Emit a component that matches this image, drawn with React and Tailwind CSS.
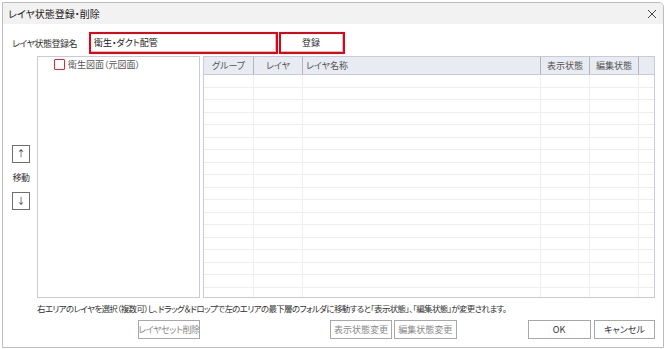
import React from 'react';

const COLS = [
  { key: 'group', label: 'グループ', w: 'w-[50px]', align: 'justify-center' },
  { key: 'layer', label: 'レイヤ', w: 'w-[49px]', align: 'justify-center' },
  { key: 'name', label: 'レイヤ名称', w: 'w-[238px]', align: 'justify-start pl-[3px]' },
  { key: 'disp', label: '表示状態', w: 'w-[49px]', align: 'justify-center' },
  { key: 'edit', label: '編集状態', w: 'w-[49px]', align: 'justify-center' },
];

const ROWS = Array.from({ length: 19 }, (_, i) => i);

function Btn({ children, className = '', disabled }) {
  return (
    <div
      className={`h-[19px] flex items-center justify-center whitespace-nowrap bg-white border border-[#a8a8a8] ${
        disabled ? 'text-[#8a8a8a]' : 'text-[#333]'
      } ${className}`}
    >
      {children}
    </div>
  );
}

export default function App() {
  return (
    <div className="w-[667px] h-[349px] bg-white pt-[2px] pl-[2px] font-['Noto_Sans_CJK_JP',sans-serif] [font-feature-settings:'palt'] text-[9px] leading-none text-[#333]">
      <div className="w-[662px] h-[346px] border border-[#bdbdbd] rounded-tr-[5px] flex flex-col overflow-hidden">
        {/* title bar */}
        <div className="h-[21px] bg-[#f2f2f2] flex items-center justify-between pl-[5px] pr-[5px] shrink-0">
          <span className="text-[#222] text-[10px]">レイヤ状態登録・削除</span>
          <svg width="10" height="10" viewBox="0 0 10 10" className="mr-[1px]">
            <path d="M1 1 L9 9 M9 1 L1 9" stroke="#444" strokeWidth="1" fill="none" />
          </svg>
        </div>

        <div className="flex-1 flex flex-col pl-[9px] pr-[8px] pt-[8px]">
          {/* name row */}
          <div className="flex items-center h-[22px]">
            <span className="w-[77px] tracking-[-0.5px]">レイヤ状態登録名</span>
            <div className="w-[189px] h-[22px] border-2 border-[#e60012] bg-white">
              <div className="h-full border-r border-b border-[#c4c4c4] flex items-center pl-[3px] text-[#222]">
                衛生・ダクト配管
              </div>
            </div>
            <div className="ml-[1px] w-[66px] h-[22px] border-2 border-[#e60012] bg-white">
              <div className="h-full border-r border-b border-[#c4c4c4] flex items-center justify-center pr-[1px]">
                登録
              </div>
            </div>
          </div>

          {/* main area */}
          <div className="flex mt-[2px] h-[242px]">
            <div className="w-[25px] flex flex-col justify-center items-start">
              <div className="w-[18px] h-[18px] border border-[#6e6e6e] bg-white flex items-center justify-center text-[#333]">↑</div>
              <div className="w-[18px] text-center mt-[10px] mb-[10px] tracking-[-0.5px]">移動</div>
              <div className="w-[18px] h-[18px] border border-[#6e6e6e] bg-white flex items-center justify-center text-[#333]">↓</div>
            </div>

            <div className="w-[163px] h-full border border-[#c9c9dc] bg-white pt-[1px]">
              <div className="flex items-center pl-[16px] h-[12px]">
                <div className="w-[11px] h-[11px] border-[1.5px] border-[#e8262e] rounded-[1px] bg-white" />
                <span className="ml-[3px] text-[#555]">衛生図面（元図面）</span>
              </div>
            </div>

            <div className="ml-[3px] flex-1 h-full border border-[#c9c9dc] bg-white overflow-hidden flex flex-col">
              <div className="flex h-[18px] shrink-0 bg-[#e9ebf2] border-b border-[#c9c9dc]">
                {COLS.map((c) => (
                  <div key={c.key} className={`${c.w} h-full flex items-center ${c.align} border-r border-[#b4b4be] text-[#555]`}>
                    {c.label}
                  </div>
                ))}
                <div className="flex-1 h-full" />
              </div>
              <div className="flex-1 overflow-hidden">
                {ROWS.map((r) => (
                  <div key={r} className={`flex border-b border-[#eeeeee] ${r % 2 === 0 ? 'h-[13px]' : 'h-[12px]'}`}>
                    {COLS.map((c) => (
                      <div key={c.key} className={`${c.w} h-full border-r border-[#eeeeee]`} />
                    ))}
                    <div className="flex-1 h-full" />
                  </div>
                ))}
              </div>
            </div>
          </div>

          {/* instruction */}
          <div className="mt-[5px] pl-[25px] h-[11px] flex items-center whitespace-nowrap text-[8.5px] tracking-[-0.65px]">
            右エリアのレイヤを選択（複数可）し、ドラッグ＆ドロップで左のエリアの最下層のフォルダに移動すると「表示状態」、「編集状態」が変更されます。
          </div>

          {/* buttons */}
          <div className="flex mt-[6px]">
            <Btn className="ml-[126px] w-[62px] tracking-[-0.4px]" disabled>レイヤセット削除</Btn>
            <Btn className="ml-[130px] w-[63px]" disabled>表示状態変更</Btn>
            <Btn className="ml-[2px] w-[63px]" disabled>編集状態変更</Btn>
            <Btn className="ml-[71px] w-[64px]">OK</Btn>
            <Btn className="ml-[3px] w-[62px]">キャンセル</Btn>
          </div>
        </div>
      </div>
    </div>
  );
}
